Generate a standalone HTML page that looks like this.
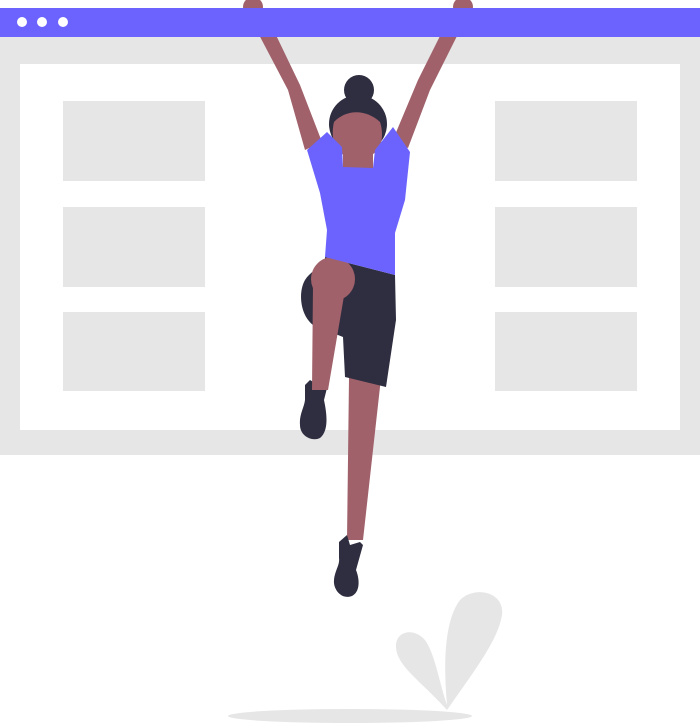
<!DOCTYPE html><html><head><style>body{margin:0;background:#fff}svg{display:block}</style></head><body>
<svg width="700" height="723" viewBox="0 0 700 723">
<rect x="0" y="37" width="700" height="418" fill="#e6e6e6"/>
<rect x="20" y="64" width="660" height="366" fill="#fff"/>
<g fill="#e6e6e6">
<rect x="63" y="101" width="142" height="80"/><rect x="63" y="207" width="142" height="80"/><rect x="63" y="312" width="142" height="79"/>
<rect x="495" y="101" width="142" height="80"/><rect x="495" y="207" width="142" height="80"/><rect x="495" y="312" width="142" height="79"/>
</g>
<ellipse cx="350" cy="716" rx="122" ry="7" fill="#e6e6e6"/>
<path d="M447 710 C420 680 395 665 396 645 C397 628 420 628 428 645 C436 660 440 685 447 705 C443 660 445 620 460 600 C475 585 505 592 502 615 C498 640 475 670 447 710Z" fill="#e6e6e6"/>
<g fill="#a0616a">
<circle cx="253" cy="7" r="10"/><circle cx="463" cy="7" r="10"/>
<path d="M246 10 L262 6 L300 85 L322 142 L305 150 L288 90Z"/>
<path d="M470 10 L456 4 L418 80 L392 142 L408 148 L430 90Z"/>
<rect x="343" y="140" width="30" height="30"/>
<path d="M349 378 L381 378 L363 540 L347 540Z"/>
</g>
<rect x="0" y="8" width="700" height="29" fill="#6c63ff"/>
<g fill="#fff"><circle cx="22" cy="22" r="5"/><circle cx="42" cy="22" r="5"/><circle cx="63" cy="22" r="5"/></g>
<g fill="#2f2e41">
<circle cx="359" cy="90" r="15"/>
<circle cx="358" cy="124" r="29"/>
<path d="M325 257 L395 275 L396 320 L386 387 L345 377 L343 337 L313 325 C300 315 298 292 305 280 C310 272 318 268 325 265Z"/>
<path d="M305 385 L310 380 L320 386 L328 384 L324 400 C326 410 330 430 320 438 C312 442 300 436 300 425 C299 415 304 408 305 400Z"/>
<path d="M339 542 L347 535 L350 545 L360 542 L363 545 L356 570 C360 580 360 592 352 596 C342 600 333 590 334 580 C335 570 340 565 339 558Z"/>
</g>
<path d="M334 122 C345 110 365 108 380 122 C382 128 384 140 378 150 C370 160 345 160 337 150 C332 142 332 130 334 122Z" fill="#a0616a"/>
<circle cx="333" cy="279" r="22" fill="#a0616a"/>
<path d="M313 285 L345 290 L328 390 L312 390Z" fill="#a0616a"/>
<path d="M307 150 L327 132 L342 147 L343 167 L373 168 L375 150 L393 127 L410 152 L405 200 L395 233 L395 275 L325 257 L327 230 L320 193Z" fill="#6c63ff"/>
</svg>
</body></html>
